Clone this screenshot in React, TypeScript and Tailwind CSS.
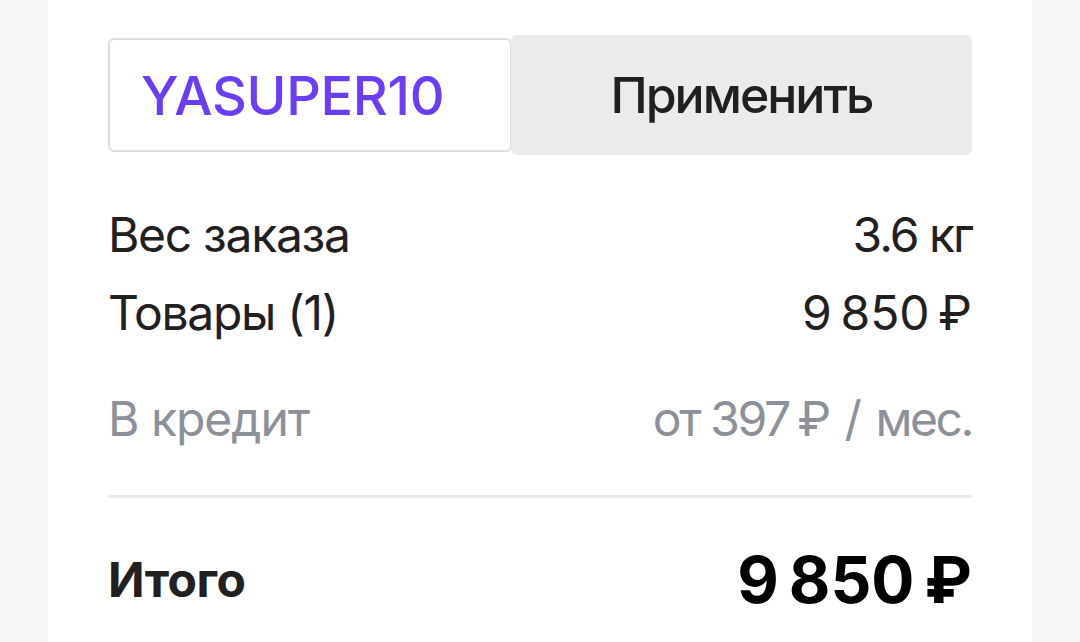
import React from "react";

const NB = "\u202f";

const rows = [
  { label: "Вес заказа", value: "3.6 кг" },
  { label: "Товары (1)", value: `9${NB}850${NB}₽` },
];

export default function App() {
  return (
    <div
      className="min-h-[642px] bg-[#f7f7f7] flex justify-center"
      style={{ fontFamily: "Inter, 'Open Sans', sans-serif" }}
    >
      <div className="w-[984px] bg-white px-[60px] pt-[35px] text-[#21201f]">
        <div className="flex items-center">
          <div className="w-[404px] h-[114px] border-2 border-[#dedede] rounded-[6px] flex items-center pl-[31px]">
            <span className="text-[54px] font-medium text-[#6b3ef6] tracking-[-0.3px]">
              YASUPER10
            </span>
          </div>
          <button className="flex-1 h-[120px] -ml-px bg-[#ebebeb] rounded-[6px] text-[50px] font-medium tracking-[-2px] text-[#21201f]">
            Применить
          </button>
        </div>

        <div className="mt-[41px]">
          {rows.map((r) => (
            <div
              key={r.label}
              className="flex justify-between h-[78px] text-[48px] leading-[78px] tracking-[-1.3px]"
            >
              <span>{r.label}</span>
              <span className="tracking-[-2px]">{r.value}</span>
            </div>
          ))}
          <div className="flex justify-between h-[78px] mt-[28px] text-[48px] leading-[78px] tracking-[-1px] text-[#8b9099]">
            <span>В кредит</span>
            <span className="tracking-[-2.4px]">от 397{NB}₽ / мес.</span>
          </div>
        </div>

        <div className="mt-[37px] h-[3px] bg-[#ebebeb]" />

        <div className="flex justify-between items-center h-[90px] mt-[37px]">
          <span className="text-[48px] font-bold leading-[90px] tracking-[-0.5px]">
            Итого
          </span>
          <span className="text-[64px] font-bold leading-[90px] tracking-[-5px] text-black">
            9{NB}850{NB}₽
          </span>
        </div>
      </div>
    </div>
  );
}
